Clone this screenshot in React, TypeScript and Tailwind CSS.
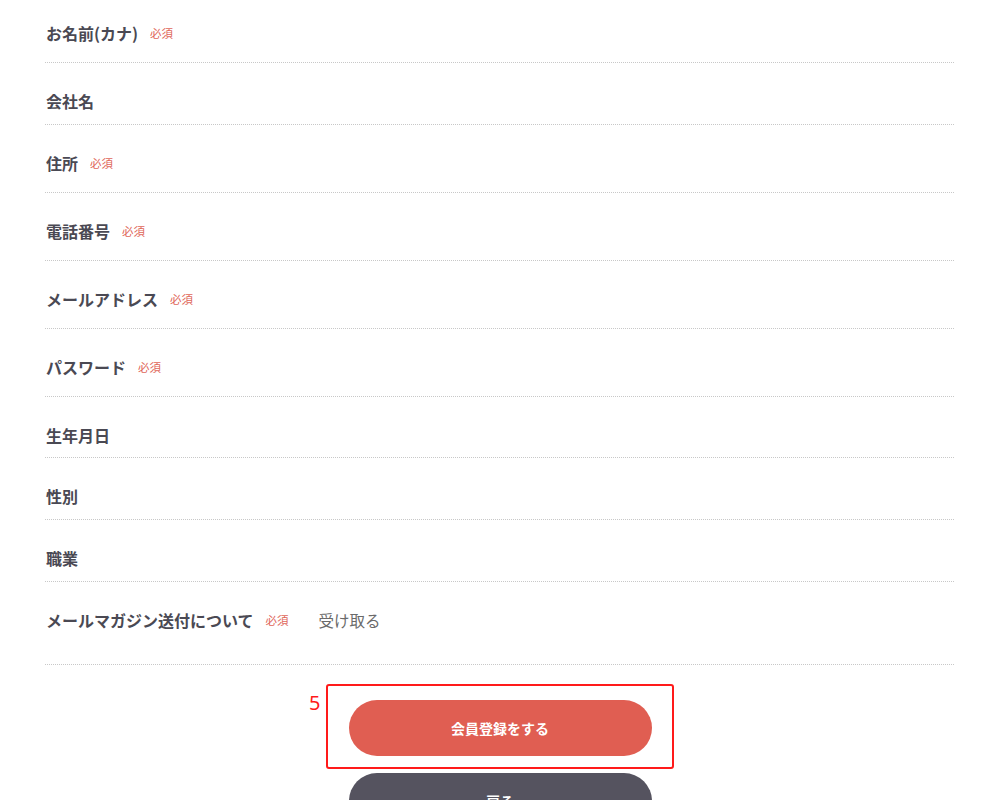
const jp = { fontFamily: '"Noto Sans CJK JP", "Noto Sans", sans-serif' };

type Row = { label: string; required?: boolean; h: string; value?: string };

const rows: Row[] = [
  { label: 'お名前(カナ)', required: true, h: 'h-[68px]' },
  { label: '会社名', h: 'h-[62px]' },
  { label: '住所', required: true, h: 'h-[68px]' },
  { label: '電話番号', required: true, h: 'h-[68px]' },
  { label: 'メールアドレス', required: true, h: 'h-[68px]' },
  { label: 'パスワード', required: true, h: 'h-[68px]' },
  { label: '生年月日', h: 'h-[61px]' },
  { label: '性別', h: 'h-[62px]' },
  { label: '職業', h: 'h-[62px]' },
  { label: 'メールマガジン送付について', required: true, h: 'h-[83px]', value: '受け取る' },
];

export default function App() {
  return (
    <div className="bg-white min-h-screen w-[1000px] h-[800px] overflow-hidden" style={jp}>
      <div className="mx-[45px] w-[909px] -mt-[5px]">
        {rows.map((r) => (
          <div key={r.label} className={`${r.h} border-b border-dotted border-[#c8c8c8] pt-[29px] flex items-start`}>
            <span className="text-[16px] leading-[18px] font-bold text-[#4a4953] pl-[1px]">{r.label}</span>
            {r.required && (
              <span className="ml-[12px] text-[11.5px] leading-[18px] text-[#e0665a]">必須</span>
            )}
            {r.value && (
              <span className="ml-[30px] text-[15.5px] leading-[18px] text-[#6a6a6a]">{r.value}</span>
            )}
          </div>
        ))}
      </div>

      <div className="flex flex-col items-center mt-[19px]">
        <div className="relative">
          <span className="absolute -left-[17px] top-[8px] text-[20px] leading-[22px] text-[#ff1a1a]" style={{ fontFamily: '"Noto Sans", sans-serif' }}>5</span>
          <div className="w-[348px] h-[85px] border-2 border-[#ff1a1a] rounded-[3px] flex items-start justify-center pt-[14px]">
            <button className="w-[303px] h-[56px] rounded-[28px] bg-[#e05e52] text-white text-[14px] font-bold">
              会員登録をする
            </button>
          </div>
        </div>
        <button className="mt-[4px] w-[303px] h-[56px] rounded-[28px] bg-[#55535f] text-white text-[14px] font-bold">
          戻る
        </button>
      </div>
    </div>
  );
}
